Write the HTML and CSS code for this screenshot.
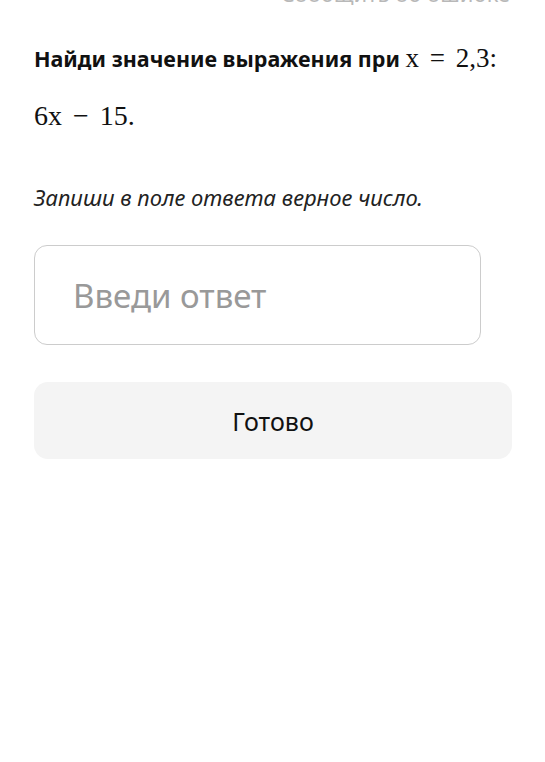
FILE: index.html
```html
<!DOCTYPE html>
<html>
<head>
    <meta name="viewport" content="width=device-width, initial-scale=1.0" />
    <meta charset="UTF-8" />
    <title>Задание</title>
    <link rel="stylesheet" href="styles.css">
</head>
<body>
    <div id="content">
        <div class="report">Сообщить об ошибке</div>
        <h1 class="task">Найди значение выражения при <span class="math">x = 2,3:</span></h1>
        <p class="expr"><span class="math">6x − 15.</span></p>
        <p class="hint">Запиши в поле ответа верное число.</p>
        <form class="answer" onsubmit="return false">
            <input class="field" type="text" placeholder="Введи ответ">
            <button class="done" type="submit">Готово</button>
        </form>
    </div>
</body>
</html>
```

FILE: styles.css
```css
* {
    box-sizing: border-box;
}
body {
    margin: 0;
    background-color: #ffffff;
    font-family: 'Noto Sans', 'Open Sans', sans-serif;
    color: #111111;
}
#content {
    padding: 0 33px 0 34px;
}
.report {
    margin-top: -22px;
    text-align: right;
    font-size: 22px;
    line-height: 30px;
    color: #b8b8b8;
    padding-right: 2px;
}
.task {
    margin: 34px 0 0;
    font-size: 21.5px;
    line-height: 32px;
    font-weight: bold;
}
.math {
    font-family: 'Liberation Serif', 'DejaVu Serif', serif;
    font-weight: normal;
    font-size: 27px;
    word-spacing: 4px;
}
.expr {
    margin: 24px 0 0;
    line-height: 34px;
}
.expr .math {
    font-size: 28px;
}
.hint {
    margin: 46px 0 0;
    font-style: italic;
    font-size: 22px;
    line-height: 30px;
    color: #222222;
}
.answer {
    display: flex;
    flex-direction: column;
    gap: 37px;
    margin-top: 33px;
}
.field {
    width: 447px;
    height: 100px;
    border: 1.5px solid #cccccc;
    border-radius: 13px;
    padding: 0 0 0 38px;
    font-family: 'Noto Sans', 'Open Sans', sans-serif;
    font-size: 33px;
    color: #111111;
    outline: none;
}
.field::placeholder {
    color: #999999;
}
.done {
    width: 100%;
    height: 77px;
    border: none;
    border-radius: 14px;
    background-color: #f4f4f4;
    font-family: 'Noto Sans', 'Open Sans', sans-serif;
    font-size: 25px;
    color: #111111;
}
```
